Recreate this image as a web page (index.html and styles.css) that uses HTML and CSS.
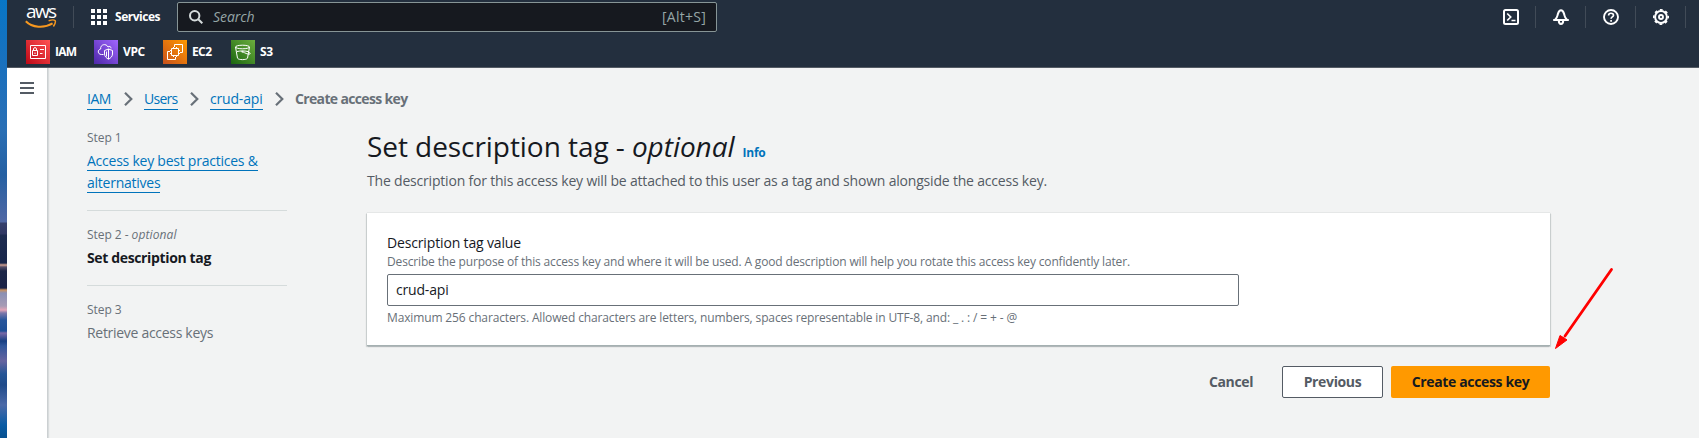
FILE: index.html
```html
<!DOCTYPE html>
<html lang="en">
<head>
<meta charset="utf-8">
<title>Create access key | IAM</title>
<link rel="stylesheet" href="styles.css">
</head>
<body>
<div class="wallpaper"></div>
<div class="app">
  <header class="header">
    <div class="topbar">
      <a class="logo">
        <span class="logo-text">aws</span>
        <svg class="logo-smile" width="32" height="10" viewBox="0 0 32 10" fill="none" stroke="#f7981f">
          <path d="M.8 2.2C7 8.6 19 9.6 27.6 4.4" stroke-width="2"/>
          <path d="M23.6 1.8c2.600-.9 5.600-1 6.400-.3.700.8-.2 3.900-1.600 6" stroke-width="1.500"/>
        </svg>
      </a>
      <a class="services">
        <svg width="16" height="16" fill="#fff"><path d="M0 0h4v4H0zM6 0h4v4H6zM12 0h4v4h-4zM0 6h4v4H0zM6 6h4v4H6zM12 6h4v4h-4zM0 12h4v4H0zM6 12h4v4H6zM12 12h4v4h-4z"/></svg>
        <span>Services</span>
      </a>
      <div class="search">
        <svg width="14" height="14" viewBox="0 0 14 14" fill="none" stroke="#d5dbdb" stroke-width="2"><circle cx="5.700" cy="5.700" r="4.700"/><path d="M9 9l4.300 4.300"/></svg>
        <span class="search-hint">Search</span>
        <span class="search-key">[Alt+S]</span>
      </div>
      <nav class="tools">
        <a class="tool"><svg width="16" height="16" viewBox="0 0 16 16" fill="none" stroke="#fff" stroke-width="2"><rect x="1" y="1" width="14" height="14" rx="1.500"/><path d="M4.200 4.500L7.700 8l-3.500 3.500M8.500 11.500h4" stroke-width="1.700"/></svg></a>
        <a class="tool"><svg width="16" height="16" viewBox="0 0 16 16" fill="none" stroke="#fff" stroke-width="2"><path d="M.2 11h15.600M2 10.800C4.600 8.700 4.200 7 5 4.600 5.600 2.700 6.700 1.300 8 1.300s2.400 1.400 3 3.300c.8 2.400.4 4.100 3 6.200" stroke-width="2"/><path d="M5.800 11.500c0 4.600 4.400 4.600 4.400 0" stroke-width="2"/></svg></a>
        <a class="tool"><svg width="16" height="16" viewBox="0 0 16 16" fill="none" stroke="#fff" stroke-width="1.900"><circle cx="8" cy="8" r="7"/><path d="M5.600 6.500C5.600 3.500 10.500 3.600 10.500 6.200c0 1.700-2.400 1.700-2.400 3.500M8.100 11v1.700" stroke-width="1.700"/></svg></a>
        <a class="tool"><svg width="16" height="16" viewBox="0 0 16 16" fill="none" stroke="#fff"><circle cx="8" cy="8" r="5.900" stroke-width="2"/><circle cx="8" cy="8" r="7.200" stroke-width="1.600" stroke-dasharray="2.830 2.830" stroke-dashoffset="1.400"/><circle cx="8" cy="8" r="2" stroke-width="1.900"/></svg></a>
      </nav>
    </div>
    <nav class="favorites">
      <a class="fav fav-iam"><svg class="fav-icon iam" viewBox="0 0 24 24"><path d="M4.500 5.500h15v13h-15zM6.500 10.500h5v5h-5zM7.500 10.500V9c0-1.900 3-1.900 3 0v1.500M9 12.500v1.500M14 9.500h4M14 13.500h2.500"/></svg><span>IAM</span></a>
      <a class="fav fav-vpc"><svg class="fav-icon vpc" viewBox="0 0 24 24"><path d="M9.500 14.500H7.300c-3.800-.2-4-4.800-.6-5.500C6 4.300 12.300 3 14 7c1.500-1.300 3.200-.2 3.100 1.300M10.500 10.500l4-1.500 4 1.500v3.500c0 2.400-2 4.200-4 5.200-2-1-4-2.800-4-5.200zM14.500 9v10M12.500 11.500v5"/></svg><span>VPC</span></a>
      <a class="fav fav-ec2"><svg class="fav-icon ec2" viewBox="0 0 24 24"><path d="M11.500 7V4.500h8v8H17M7 11.500H4.500v8h8V17M8.500 8.500h7v7h-7zM10.500 8.500V7M13.500 8.500V7M10.500 17v-1.500M13.500 17v-1.500M8.500 10.500H7M8.500 13.500H7M17 10.500h-1.500M17 13.500h-1.500"/></svg><span>EC2</span></a>
      <a class="fav fav-s3"><svg class="fav-icon s3" viewBox="0 0 24 24"><ellipse cx="11.500" cy="7" rx="7" ry="1.800"/><path d="M4.500 7l2 11.200c1 1.900 9 1.900 10 0l2-11.200M11.300 11.500c3 1.800 6.700 3.400 7.800 2.400.5-.6-.6-1.600-1.600-2.100M6 11.500c3.500-.8 8-.8 11.500.2"/><circle cx="11.300" cy="11.700" r=".6"/></svg><span>S3</span></a>
    </nav>
  </header>
  <div class="body">
    <aside class="rail"><svg width="14" height="12" fill="#545b64"><path d="M0 0h14v2H0zM0 5h14v2H0zM0 10h14v2H0z"/></svg></aside>
    <main class="content">
      <nav class="crumbs">
        <a class="link">IAM</a>
        <svg class="chev" viewBox="0 0 9 14"><path d="M1 .8L7.300 7 1 13.200"/></svg>
        <a class="link users">Users</a>
        <svg class="chev" viewBox="0 0 9 14"><path d="M1 .8L7.300 7 1 13.200"/></svg>
        <a class="link crud">crud-api</a>
        <svg class="chev" viewBox="0 0 9 14"><path d="M1 .8L7.300 7 1 13.200"/></svg>
        <span class="current">Create access key</span>
      </nav>
      <div class="wizard">
        <ol class="steps">
          <li class="step"><div class="step-no">Step 1</div><div class="step-name"><a class="link">Access key best practices &amp; alternatives</a></div></li>
          <li class="step"><div class="step-no">Step 2 - <i>optional</i></div><div class="step-name active">Set description tag</div></li>
          <li class="step"><div class="step-no">Step 3</div><div class="step-name muted">Retrieve access keys</div></li>
        </ol>
        <section class="pane">
          <div class="title-row"><h1 class="title">Set description tag - <i>optional</i></h1><a class="info">Info</a></div>
          <p class="lead">The description for this access key will be attached to this user as a tag and shown alongside the access key.</p>
          <div class="card">
            <div class="label">Description tag value</div>
            <div class="help describe">Describe the purpose of this access key and where it will be used. A good description will help you rotate this access key confidently later.</div>
            <div class="input">crud-api</div>
            <div class="help limit">Maximum 256 characters. Allowed characters are letters, numbers, spaces representable in UTF-8, and: _ . : / = + - @</div>
          </div>
          <div class="actions">
            <a class="btn cancel">Cancel</a>
            <a class="btn previous">Previous</a>
            <a class="btn primary">Create access key</a>
          </div>
        </section>
      </div>
    </main>
  </div>
</div>
<svg class="arrow" width="62" height="86" viewBox="0 0 62 86"><path d="M58.500 3.500L12 70" stroke="#f00" stroke-width="2.800" stroke-linecap="round"/><path d="M2.500 82.500L7 69.500l3 1.800 4 2.600z" fill="#f00" stroke="#f00"/></svg>
</body>
</html>
```

FILE: styles.css
```css
* { box-sizing: border-box; }
body {
  margin: 0;
  display: flex;
  position: relative;
  height: 438px;
  overflow: hidden;
  font: 14px/22px "Open Sans", "Noto Sans", sans-serif;
  color: #16191f;
  background: #f2f3f3;
}
svg { display: block; flex: none; }
.wallpaper {
  flex: none;
  width: 7px;
  background: linear-gradient(#0876c6 0, #1b70bd 70px, #2a6fb5 130px, #2560a2 175px, #5168a5 222px, #35406c 223px, #303763 234px, #1d2b50 235px, #18264a 263px, #d0a090 265px, #544d66 267px, #1d2748 271px, #1b2347 288px, #c8905f 290px, #8a90b4 293px, #a79cb5 306px, #e3a5b8 310px, #7d78ab 313px, #28569c 320px, #1e4f96 331px, #7968a6 333px, #173f82 341px, #30569b 346px, #6664a0 361px, #255596 374px, #204b8a 385px, #4c6aa8 405px, #0a5ca5 425px, #07508f 438px);
}
.app { flex: 1; display: flex; flex-direction: column; }

.header { height: 68px; background: #232f3e; border-bottom: 1px solid #545b64; color: #fff; }
.topbar { display: flex; align-items: center; height: 34px; }
.logo { width: 67px; height: 22px; padding-left: 18px; border-right: 1px solid #414b57; }
.logo-text { display: block; height: 13px; margin-left: 1px; font-size: 19px; line-height: 10px; font-weight: 500; letter-spacing: -1.6px; }
.services { display: flex; align-items: center; width: 103px; padding-left: 17px; gap: 8px; font-size: 12px; font-weight: 700; letter-spacing: -.48px; }
.search { display: flex; align-items: center; width: 540px; height: 30px; padding: 0 10px 0 11px; background: #16191f; border: 1px solid #879596; border-radius: 2px; color: #95a5a6; }
.search-hint { flex: 1; margin-left: 10px; font-style: italic; letter-spacing: -.05px; }
.search-key { letter-spacing: .25px; }
.tools { display: flex; margin: 0 13px 0 auto; }
.tool { display: flex; align-items: center; justify-content: center; width: 50px; height: 22px; border-right: 1px solid #414b57; }

.favorites { display: flex; padding: 6px 0 0 19px; font-size: 12px; font-weight: 700; }
.fav { display: flex; align-items: center; gap: 5px; height: 24px; }
.fav-iam { width: 68px; letter-spacing: -.8px; }
.fav-vpc { width: 69px; letter-spacing: -.4px; }
.fav-ec2 { width: 68px; letter-spacing: -.6px; }
.fav-s3 { letter-spacing: -.3px; }
.fav-icon { width: 24px; height: 24px; fill: none; stroke: #fff; stroke-width: 1; }
.iam { background: linear-gradient(45deg, #bd0816, #ff5252); }
.vpc { background: linear-gradient(45deg, #4d27a8, #a166ff); }
.ec2 { background: linear-gradient(45deg, #c8511b, #f90); }
.s3 { background: linear-gradient(45deg, #1b660f, #6cae3e); }

.body { flex: 1; display: flex; }
.rail { width: 41px; padding: 14px 0 0 13px; background: #fff; border-right: 1px solid #ccd0d2; box-shadow: 1px 0 1px rgba(0, 28, 36, .1); }
.content { flex: 1; padding: 20px 0 0 39px; }
.link { color: #0073bb; border-bottom: 1px solid #0073bb; }

.crumbs { display: flex; height: 22px; align-items: center; letter-spacing: -.45px; }
.crumbs .link { height: 21px; line-height: 20px; width: 25px; white-space: nowrap; }
.crumbs .users { width: 34px; letter-spacing: -.75px; }
.crumbs .crud { width: 53px; letter-spacing: -.18px; }
.chev { width: 9px; height: 14px; margin: 0 11.500px; fill: none; stroke: #687078; stroke-width: 2.200; }
.current { font-weight: 700; color: #687078; letter-spacing: -.65px; }

.wizard { display: flex; gap: 80px; padding-top: 18px; }
.steps { width: 200px; margin: 0; padding: 0; list-style: none; }
.step { padding-bottom: 16px; }
.step + .step { border-top: 1px solid #d5dbdb; padding-top: 14px; }
.step-no { font-size: 12px; line-height: 20px; margin-bottom: 2px; color: #687078; letter-spacing: -.05px; }
.step-no i { letter-spacing: .1px; }
.step-name { letter-spacing: -.24px; }
.step-name.active { font-weight: 700; letter-spacing: -.36px; }
.step-name.muted { color: #687078; letter-spacing: -.3px; }

.pane { width: 1183px; }
.title-row { display: flex; align-items: baseline; height: 36px; }
.title { margin: 0; font-size: 28px; line-height: 36px; font-weight: 400; letter-spacing: -.06px; white-space: nowrap; }
.info { margin-left: 8px; font-size: 12px; font-weight: 700; letter-spacing: -.2px; color: #0073bb; }
.lead { margin: 6px 0 21px; color: #545b64; letter-spacing: -.195px; }
.card { height: 133px; padding: 19px 20px 0; background: #fff; box-shadow: 0 0 1px rgba(0, 28, 36, .3), 1px 1px 1px rgba(0, 28, 36, .12), -1px 1px 1px rgba(0, 28, 36, .12); border-bottom: 1px solid #a5b0b1; }
.label { letter-spacing: -.15px; }
.help { font-size: 12px; line-height: 16px; color: #687078; white-space: nowrap; }
.describe { letter-spacing: -.157px; }
.limit { letter-spacing: -.137px; }
.input { width: 852px; height: 32px; margin: 4px 0; padding: 0 8px; border: 1px solid #687078; border-radius: 2px; line-height: 30px; letter-spacing: -.18px; }
.actions { display: flex; justify-content: flex-end; gap: 8px; margin-top: 20px; }
.btn { display: flex; align-items: center; justify-content: center; height: 32px; border-radius: 2px; font-weight: 700; color: #545b64; letter-spacing: -.36px; }
.cancel { width: 86px; }
.previous { width: 101px; background: #fff; border: 1px solid #545b64; }
.primary { width: 159px; background: #f90; color: #16191f; }
.arrow { position: absolute; left: 1553px; top: 266px; }
```
